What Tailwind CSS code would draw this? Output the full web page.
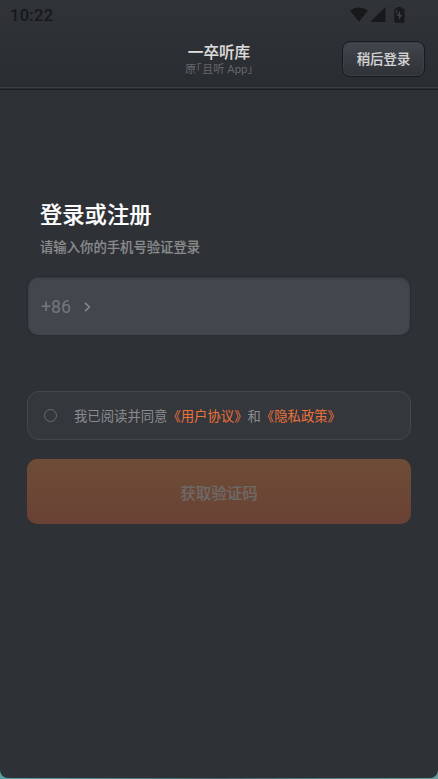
<!DOCTYPE html>
<html lang="zh-CN">
<head>
<meta charset="utf-8">
<title>登录</title>
<script src="https://cdn.jsdelivr.net/npm/@tailwindcss/browser@4"></script>
</head>
<body class="h-[779px] w-[438px] overflow-hidden bg-linear-to-r from-[#55a3a5] via-[#46636b] to-[#639c99] font-['Roboto','Noto_Sans_CJK_SC',sans-serif]">
<div class="flex h-[778px] flex-col overflow-hidden rounded-b-[8px] bg-[#2e3135]">
  <header class="flex h-[90px] shrink-0 flex-col border-b border-[#1b1e20] bg-linear-to-b from-[#303338] to-[#292c30]">
    <div class="flex h-[30px] items-center justify-between pr-[33px] pl-[10px] text-[#17191b]">
      <span class="pt-[2px] text-[16.5px] leading-[28px] font-medium tracking-[0.3px]">10:22</span>
      <div class="flex items-center">
        <svg class="h-4 w-[18px]" viewBox="0 0 18 16" fill="currentColor"><path d="M0 3.4Q9-2.6 18 3.4L9 14.8Z"/></svg>
        <svg class="ml-[2px] h-4 w-4" viewBox="0 0 16 16" fill="currentColor"><path d="M15.5 0V15H0Z"/></svg>
        <svg class="ml-[8px] h-4 w-[11px]" viewBox="0 0 11 16"><path fill="currentColor" d="M3.200 0h4.300v1.600h1.800q1.200 0 1.200 1.200v11.700q0 1.200-1.200 1.200H1.500Q.3 15.700.3 14.500V2.800Q.3 1.600 1.500 1.600h1.700Z"/><path fill="#3b3e42" d="M6 3.500 2.700 9h2.100v4.300L8.300 7.700H6ZM1.700 3.200h2v1.300h-.9v1.700H1.700Z"/></svg>
      </div>
    </div>
    <div class="grid h-[58px] grid-cols-[1fr_auto_1fr] items-center border-b border-[#3b3f42]">
      <span></span>
      <div class="flex flex-col items-center">
        <h1 class="pt-[4px] text-[15.6px] leading-[18px] font-medium text-[#dcdcdc] [-webkit-text-stroke:0.15px]">一卒听库</h1>
        <p class="text-[11.3px] leading-[16px] whitespace-nowrap text-[#65686b] [font-feature-settings:'halt']">原「且听 App」</p>
      </div>
      <button class="mt-[1px] mr-[13px] h-[36px] w-[83px] justify-self-end rounded-[8px] border border-[#181a1d] bg-linear-to-b from-[#42464e] to-[#2f3236] pt-[2px] text-[13.4px] font-medium text-[#d3d4d6] inset-shadow-[0_0_0_1px_#3c4045] [-webkit-text-stroke:0.15px]">稍后登录</button>
    </div>
  </header>
  <main class="flex flex-col px-[27px]">
    <h2 class="mt-[109px] pl-[13px] text-[22.3px] leading-[32px] font-medium text-white [-webkit-text-stroke:0.2px]">登录或注册</h2>
    <p class="mt-[7px] pl-[13px] text-[13.35px] leading-[20px] font-medium text-[#898b8d] [-webkit-text-stroke:0.15px]">请输入你的手机号验证登录</p>
    <div class="mx-px mt-[19px] flex h-[58px] items-center rounded-[10px] bg-[#42464d] pt-px pl-[13px] text-[#74767a] shadow-[0_0_2px_0px_#202326] inset-shadow-[0_1px_2px_#34383d]">
      <span class="text-[17.8px] leading-[24px]">+86</span>
      <svg class="ml-[13px] h-[10px] w-[7px]" viewBox="0 0 7 10" fill="none" stroke="#85878a" stroke-width="1.6"><path d="M1 .8 5.400 5 1 9.200"/></svg>
    </div>
    <div class="mt-[56px] flex h-[49px] items-center rounded-[12px] border border-[#45484b] bg-[#34373b] pl-[16px]">
      <span class="size-[13px] rounded-full border border-[#686b6e]"></span>
      <p class="ml-[17px] pt-[2px] text-[13.35px] leading-[20px] whitespace-nowrap text-[#8a8c8f] [text-spacing-trim:space-all]">我已阅读并同意<span class="text-[#ed713b]">《用户协议》</span>和<span class="text-[#ed713b]">《隐私政策》</span></p>
    </div>
    <button class="mt-[19px] h-[65px] rounded-[10px] bg-linear-to-b from-[#6e4c36] to-[#694135] pt-[6px] text-[15.5px] font-medium text-[#6f6966] [-webkit-text-stroke:0.15px]">获取验证码</button>
  </main>
</div>
</body>
</html>
